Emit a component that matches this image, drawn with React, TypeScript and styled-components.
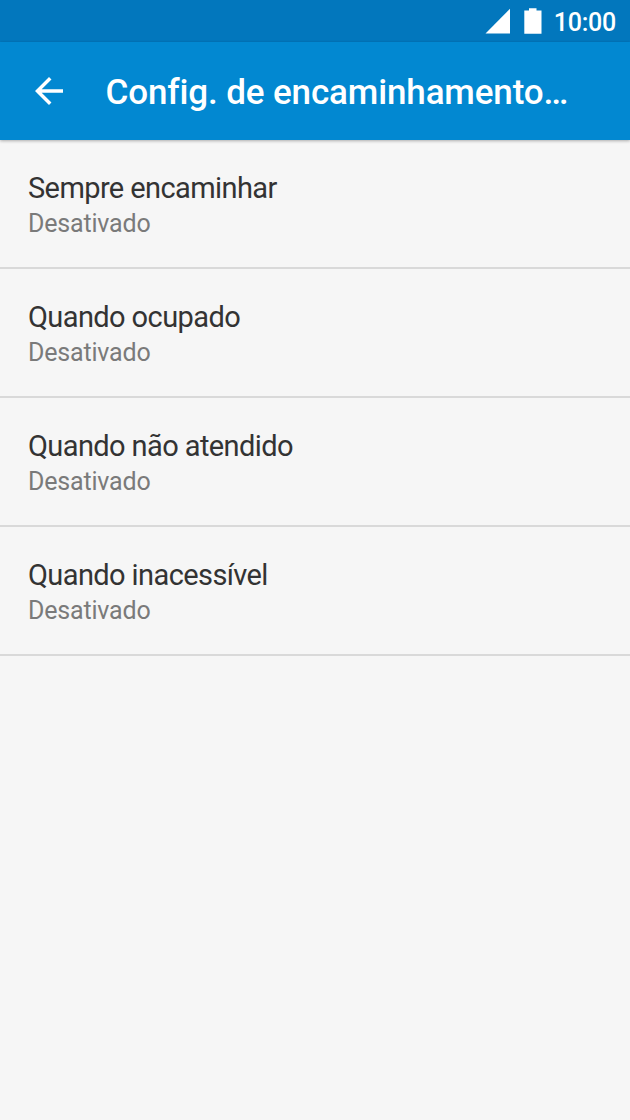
import styled, { createGlobalStyle } from 'styled-components';

const GlobalStyle = createGlobalStyle`
	body {
		margin: 0;
		background-color: #f6f6f6;
		font-family: Roboto, 'Liberation Sans', sans-serif;
	}
`;

const Screen = styled.div`
	width: 630px;
	height: 1120px;
	display: flex;
	flex-direction: column;
	background-color: #f6f6f6;
	overflow: hidden;
`;

const StatusBar = styled.div`
	height: 42px;
	flex: none;
	display: flex;
	align-items: center;
	justify-content: flex-end;
	padding-right: 14px;
	box-sizing: border-box;
	background-color: #0277bd;
	color: #fff;
`;

const StatusIcon = styled.svg<{ $gap: number }>`
	flex: none;
	margin-right: ${({ $gap }) => $gap}px;
	fill: #fff;
`;

const Clock = styled.span`
	font-size: 25px;
	font-weight: 500;
	line-height: 42px;
	letter-spacing: -0.25px;
	padding-top: 3px;
`;

const AppBar = styled.header`
	height: 98px;
	flex: none;
	display: flex;
	align-items: center;
	padding-left: 28px;
	box-sizing: border-box;
	background-color: #0288d1;
	box-shadow: 0 1px 3px rgba(0, 0, 0, 0.3);
	color: #fff;
	z-index: 1;
`;

const BackButton = styled.button`
	display: flex;
	padding: 0;
	border: 0;
	margin-right: 35.5px;
	background: none;
	color: #fff;
`;

const Title = styled.h1`
	margin: 0;
	padding-top: 4px;
	font-size: 35px;
	font-weight: 500;
	line-height: 42px;
	letter-spacing: -0.13px;
	white-space: nowrap;
`;

const List = styled.ul`
	margin: 0;
	padding: 0;
	list-style: none;
`;

const Row = styled.li`
	height: 129px;
	padding: 29px 28px 0;
	box-sizing: border-box;
	border-bottom: 2px solid #d9d9d9;
`;

const RowTitle = styled.div`
	font-size: 29px;
	line-height: 38px;
	letter-spacing: -0.6px;
	color: #333;
`;

const RowStatus = styled.div`
	font-size: 25px;
	line-height: 34px;
	letter-spacing: -0.18px;
	color: #7a7a7a;
`;

const options = [
	{ title: 'Sempre encaminhar', status: 'Desativado' },
	{ title: 'Quando ocupado', status: 'Desativado' },
	{ title: 'Quando não atendido', status: 'Desativado' },
	{ title: 'Quando inacessível', status: 'Desativado' },
];

const App = () => (
	<>
		<GlobalStyle />
		<Screen>
			<StatusBar>
				<StatusIcon $gap={14} width='25' height='26' viewBox='0 0 25 26'>
					<path d='M25 .8v24.700H.5z' />
				</StatusIcon>
				<StatusIcon $gap={12} width='18' height='26' viewBox='0 0 18 26'>
					<path d='M5 .3h7.500v2.200h5v23.300H.3V2.500H5z' />
				</StatusIcon>
				<Clock>10:00</Clock>
			</StatusBar>

			<AppBar>
				<BackButton type='button' aria-label='Voltar'>
					<svg width='42' height='42' viewBox='0 0 24 24' fill='currentColor'>
						<path d='M20 11H7.830l5.590-5.590L12 4l-8 8 8 8 1.410-1.410L7.830 13H20v-2z' />
					</svg>
				</BackButton>
				<Title>Config. de encaminhamento…</Title>
			</AppBar>

			<List>
				{options.map(({ title, status }) => (
					<Row key={title}>
						<RowTitle>{title}</RowTitle>
						<RowStatus>{status}</RowStatus>
					</Row>
				))}
			</List>
		</Screen>
	</>
);

export default App;
